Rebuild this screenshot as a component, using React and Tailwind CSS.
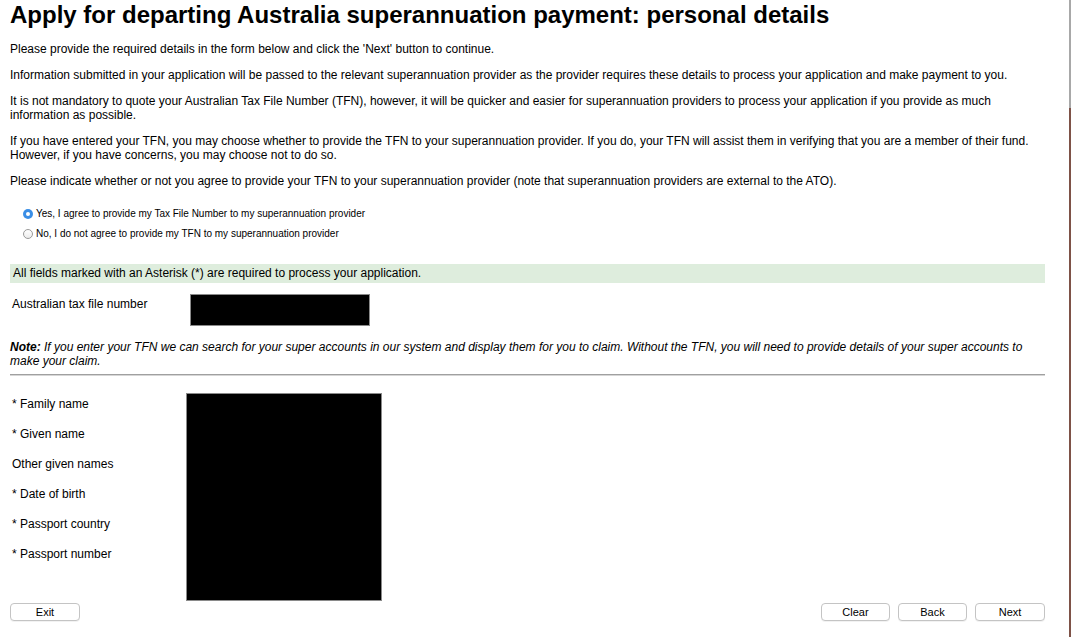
import React from "react";

const font = { fontFamily: '"Liberation Sans", Arial, Helvetica, sans-serif' };

function Radio({ checked, label }) {
  return (
    <div className="flex items-center h-[20px]">
      {checked ? (
        <span className="w-[10px] h-[10px] rounded-full bg-[#3a8ee6] flex items-center justify-center mr-[3px]">
          <span className="w-[4px] h-[4px] rounded-full bg-white" />
        </span>
      ) : (
        <span className="w-[10px] h-[10px] rounded-full border border-[#9a9a9a] bg-gradient-to-b from-white to-[#ececec] mr-[3px]" />
      )}
      <span className="text-[10px] leading-[12px] text-black">{label}</span>
    </div>
  );
}

function Btn({ children, w }) {
  return (
    <button
      className={`h-[18px] ${w} rounded-[4px] border border-[#c4c4c4] bg-white text-[11px] leading-[16px] text-black shadow-[0_1px_0_rgba(0,0,0,0.05)]`}
    >
      {children}
    </button>
  );
}

export default function App() {
  const labels = [
    "* Family name",
    "* Given name",
    "Other given names",
    "* Date of birth",
    "* Passport country",
    "* Passport number",
  ];
  return (
    <div className="flex w-[1071px] h-[637px] bg-white overflow-hidden" style={font}>
      <div className="flex-1 pl-[10px] pr-[24px]">
        <h1 className="text-[24px] leading-[30px] font-bold text-black">
          Apply for departing Australia superannuation payment: personal details
        </h1>
        <div className="mt-[12px] text-[12px] leading-[14px] text-black">
          <p className="mb-[12px]">
            Please provide the required details in the form below and click the 'Next' button to continue.
          </p>
          <p className="mb-[12px]">
            Information submitted in your application will be passed to the relevant superannuation provider as the provider requires these details to process your application and make payment to you.
          </p>
          <p className="mb-[12px] pr-[10px]">
            It is not mandatory to quote your Australian Tax File Number (TFN), however, it will be quicker and easier for superannuation providers to process your application if you provide as much information as possible.
          </p>
          <p className="mb-[12px]">
            If you have entered your TFN, you may choose whether to provide the TFN to your superannuation provider. If you do, your TFN will assist them in verifying that you are a member of their fund. However, if you have concerns, you may choose not to do so.
          </p>
          <p>
            Please indicate whether or not you agree to provide your TFN to your superannuation provider (note that superannuation providers are external to the ATO).
          </p>
        </div>

        <div className="mt-[16px] ml-[13px]">
          <Radio checked label="Yes, I agree to provide my Tax File Number to my superannuation provider" />
          <Radio label="No, I do not agree to provide my TFN to my superannuation provider" />
        </div>

        <div className="mt-[20px] h-[19px] bg-[#deeddd] pl-[3px] text-[12px] leading-[19px] text-black">
          All fields marked with an Asterisk (*) are required to process your application.
        </div>

        <div className="mt-[11px] flex items-start">
          <div className="w-[180px] pl-[2px] text-[12px] leading-[20px] text-black">
            Australian tax file number
          </div>
          <div className="w-[180px] h-[32px] bg-black border border-[#8a8a8a]" />
        </div>

        <p className="mt-[14px] text-[12px] leading-[14px] italic text-black">
          <span className="font-bold">Note:</span> If you enter your TFN we can search for your super accounts in our system and display them for you to claim. Without the TFN, you will need to provide details of your super accounts to make your claim.
        </p>

        <div className="mt-[6px] h-[2px] border-t border-[#a0a0a0] bg-[#d6d6d6]" />

        <div className="mt-[17px] flex items-start">
          <div className="w-[176px] pl-[2px] text-[12px] text-black">
            {labels.map((l) => (
              <div key={l} className="h-[30px] leading-[23px]">
                {l}
              </div>
            ))}
          </div>
          <div className="w-[196px] h-[208px] bg-black border border-[#8a8a8a]" />
        </div>

        <div className="mt-[2px] flex justify-between">
          <Btn w="w-[70px]">Exit</Btn>
          <div className="flex gap-[8px]">
            <Btn w="w-[69px]">Clear</Btn>
            <Btn w="w-[69px]">Back</Btn>
            <Btn w="w-[70px]">Next</Btn>
          </div>
        </div>
      </div>
      <div className="w-[2px] flex flex-col">
        <div className="h-[108px] bg-[#a8a8a8]" />
        <div className="flex-1 bg-[#7e5248]" />
      </div>
    </div>
  );
}
